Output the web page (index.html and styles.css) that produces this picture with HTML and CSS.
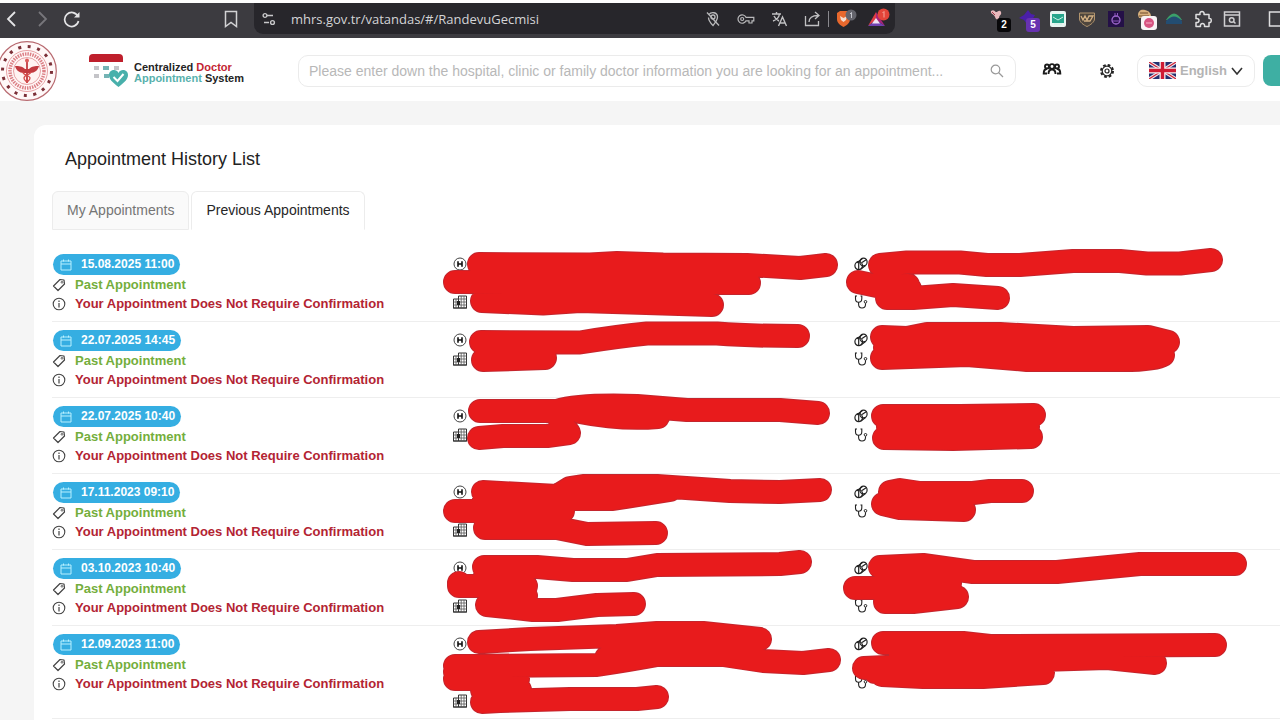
FILE: index.html
```html
<!DOCTYPE html>
<html lang="en">
<head>
<meta charset="utf-8">
<title>Appointment History List</title>
<link rel="stylesheet" href="styles.css">
</head>
<body>
<svg class="defs" aria-hidden="true">
  <symbol id="i-cal" viewBox="0 0 12 12"><path d="M1 2h10v9H1zM1 5h10M3.500 .5v2M8.500 .5v2" fill="none" stroke="currentColor"/></symbol>
  <symbol id="i-tag" viewBox="0 0 14 14"><path d="M8 1.500 12 2l.5 4-6.500 6.500L1.500 8z" fill="none" stroke="currentColor" stroke-width="1.200" stroke-linejoin="round"/><circle cx="10" cy="4.300" r=".9" fill="none" stroke="currentColor" stroke-width=".8"/></symbol>
  <symbol id="i-info" viewBox="0 0 14 14"><circle cx="7" cy="7" r="5.800" fill="none" stroke="currentColor" stroke-width="1.100"/><path d="M7 6v4.500M7 3.500v1.400" stroke="currentColor" stroke-width="1.200"/></symbol>
  <symbol id="i-hosp" viewBox="0 0 14 14"><circle cx="7" cy="7" r="6" fill="none" stroke="#444" stroke-width="1"/><path d="M5 4.300v5.400M9 4.300v5.400M5 7h4" stroke="#111" stroke-width="1.600"/></symbol>
  <symbol id="i-bld" viewBox="0 0 14 14"><path d="M5.500 13V1h8v12zM.5 13V4h5v9zM0 13h14" fill="none" stroke="#333" stroke-width="1"/><path d="M8.200 1v12M11 1v12M5.500 4h8M5.500 7h8M5.500 10h8M3 4v9M.5 7h5M.5 10h5" stroke="#555" stroke-width=".8"/><path d="M4 6h3v4H4z" fill="#222"/></symbol>
  <symbol id="i-clinic" viewBox="0 0 14 14"><g fill="none" stroke="#222" stroke-width="1.200"><ellipse cx="4.700" cy="8.700" rx="3.800" ry="4"/><path d="M4.700 4.700v8M2.500 6l6-4.500M7 12l4.500-3.500M8 5.500l4.500-3"/><ellipse cx="9.500" cy="5" rx="3.600" ry="3.900"/></g></symbol>
  <symbol id="i-steth" viewBox="0 0 14 14"><path d="M3 1H1.500v2.500C1.500 6 3 7.300 4.500 7.300S7.800 6 7.800 3.500V1H6.500M4.600 7.300v2c0 2.200 1.400 3.700 3.400 3.700s3.500-1.400 3.500-3.500V8.200" fill="none" stroke="#222" stroke-width="1.100"/><circle cx="11.500" cy="6.800" r="1.300" fill="none" stroke="#222"/></symbol>
</svg>

<nav class="toolbar" aria-label="Browser">
  <div class="nav">
    <button class="tb" aria-label="Back"><svg width="16" height="18" viewBox="0 0 16 18"><path d="M11 2 4 9l7 7" fill="none" stroke="#e4e4e6" stroke-width="1.800"/></svg></button>
    <button class="tb" aria-label="Forward"><svg width="16" height="18" viewBox="0 0 16 18"><path d="m5 2 7 7-7 7" fill="none" stroke="#77767b" stroke-width="1.800"/></svg></button>
    <button class="tb" aria-label="Reload"><svg width="18" height="18" viewBox="0 0 18 18"><path d="M15 6.500A7 7 0 1 0 15.500 11" fill="none" stroke="#e4e4e6" stroke-width="1.700"/><path d="M16.500 2v5.500H11z" fill="#e4e4e6"/></svg></button>
    <button class="tb bookmark" aria-label="Bookmark"><svg width="16" height="18" viewBox="0 0 16 18"><path d="M2.500 1.500h11v15L8 12.500l-5.500 4z" fill="none" stroke="#d2d2d4" stroke-width="1.500"/></svg></button>
  </div>
  <div class="address">
    <svg width="14" height="14" viewBox="0 0 14 14"><g fill="none" stroke="#c8c8ca" stroke-width="1.400"><circle cx="3" cy="3.500" r="1.900"/><path d="M5 3.500h6M2 10.500h5"/><circle cx="10.500" cy="10.500" r="1.900"/></g></svg>
    <input class="url" aria-label="Address" value="mhrs.gov.tr/vatandas/#/RandevuGecmisi">
    <div class="actions">
      <button class="tb" aria-label="Location blocked"><svg width="16" height="16" viewBox="0 0 16 16"><g fill="none" stroke="#b9b9bb" stroke-width="1.300"><path d="M4 3.500C6 .5 12.500 1 12.500 6c0 3-4.500 8.500-4.500 8.500S3.500 10 3.500 6.500"/><circle cx="8" cy="6" r="2"/><path d="m2 1.500 12 13"/></g></svg></button>
      <button class="tb" aria-label="Passwords"><svg width="18" height="12" viewBox="0 0 18 12"><g fill="none" stroke="#b9b9bb" stroke-width="1.200"><path d="M9 4.300A4.200 4.200 0 1 0 9 7.800h3V10h3V7.800h1.800V4.300z"/><circle cx="5.200" cy="6" r="1.500"/></g></svg></button>
      <button class="tb" aria-label="Translate"><svg width="17" height="16" viewBox="0 0 17 16"><path d="M1 3h9M5.500 1v2M8.500 3C8 6 5 9 2 10M3 5c1 2.500 3 4 5 5M7.500 15l4-9 4 9M9 12h5" fill="none" stroke="#c0c0c2" stroke-width="1.400"/></svg></button>
      <button class="tb" aria-label="Share"><svg width="17" height="16" viewBox="0 0 17 16"><path d="M1.500 5v9.500h13V10M5 11c0-4 3-6.500 9-6.500M11 1l4 3.500L11 8" fill="none" stroke="#c0c0c2" stroke-width="1.300"/></svg></button>
      <span class="sep"></span>
      <button class="tb" aria-label="Shields"><svg width="24" height="24" viewBox="0 0 24 24"><path d="M4 6l3-2h7l3 2v6c0 4-3 6-6.500 8C7 18 4 16 4 12z" fill="#e8682d"/><path d="m7 9 3.500 2L14 9l-1 4-2.500 2L8 13z" fill="#f4ddd0"/><circle cx="18" cy="8" r="5.500" fill="#64646c"/><path d="m17 7 1.500-1.500V11" stroke="#c5c5cc" fill="none"/></svg></button>
      <button class="tb" aria-label="Rewards"><svg width="24" height="24" viewBox="0 0 24 24"><path d="M10 5v8l-8 6z" fill="#df3d43"/><path d="m10 5 9 14-9-6z" fill="#a9237b"/><path d="m2 19 8-6 9 6z" fill="#7042b0"/><path d="m10 11 4 5.500H6z" fill="#f2e3f1"/><circle cx="17.500" cy="7.500" r="6" fill="#e24439"/><path d="m16.500 6 1.500-1.500V10.500" stroke="#f5a49a" fill="none"/></svg></button>
    </div>
  </div>
  <div class="exts">
    <button class="tb" aria-label="Extension, 2"><svg width="24" height="24" viewBox="0 0 24 24"><path d="M3 4c3-2 4 1 5 1s4-3 5 0-2 3-2 6-3 2-4-1-5-3-4-6z" fill="#e9b9bd"/><path d="m4 5 3 3" stroke="#a33949"/></svg><span class="badge b-black">2</span></button>
    <button class="tb" aria-label="Extension, 5"><svg width="24" height="24" viewBox="0 0 24 24"><path d="m11 3 3 4 4 1-3 5-5 4-3-4-5-2 5-3z" fill="#4a1fa8"/></svg><span class="badge b-violet">5</span></button>
    <button class="tb" aria-label="Mail extension"><svg width="16" height="16" viewBox="0 0 16 16"><rect width="16" height="16" rx="2" fill="#e9f5f2"/><path d="M2 3h12v9H2z" fill="#27a58c"/><path d="m3 6 5 3 5-3M4 13h8" stroke="#c9f0e5" fill="none"/></svg></button>
    <button class="tb" aria-label="Guard extension"><svg width="18" height="18" viewBox="0 0 18 18"><path d="M1.500 3h15v6c0 3-4 6-7.500 7.500C5.500 15 1.500 12 1.500 9z" fill="#4f463d" stroke="#b2946d"/><path d="m3 6 2 4 2-4 2 4 2-4h4l-3 5H6" fill="none" stroke="#d4b184" stroke-width="1.300"/></svg></button>
    <button class="tb" aria-label="Potion extension"><svg width="16" height="16" viewBox="0 0 16 16"><rect width="16" height="16" fill="#241047"/><circle cx="8" cy="9" r="4" fill="none" stroke="#a26bd1" stroke-width="1.300"/><path d="M7 2v4M9.500 2v4M5 10h6" stroke="#8c56c0"/></svg></button>
    <button class="tb" aria-label="Shop extension"><svg width="24" height="24" viewBox="0 0 24 24"><path d="M5 8c0-4 3-6 7-5s6 3 6 7l-12 1z" fill="#d7b07c"/><path d="M7 6h8M6 9h10" stroke="#6f4d2c"/><rect x="8" y="9" width="16" height="14" rx="3" fill="#f8f3f5"/><circle cx="16" cy="16" r="5" fill="#d75381"/><path d="M13 16h6" stroke="#f7b4ca"/></svg></button>
    <button class="tb" aria-label="Mountain extension"><svg width="18" height="18" viewBox="0 0 18 18"><path d="M1 10Q9-3 17 10z" fill="#3ba06a"/><path d="M1 11Q9 2 17 11v3H1z" fill="#234d72"/></svg></button>
    <button class="tb" aria-label="Extensions"><svg width="18" height="18" viewBox="0 0 18 18"><path d="M2 4.500h4c-1-4 5-4 4 0h5v4c3-1 3 5 0 4v4H10.500c1-4-5-4-4 0H2v-4c4 1 4-5 0-4z" fill="none" stroke="#dededf" stroke-width="1.500" stroke-linejoin="round"/></svg></button>
    <button class="tb" aria-label="Search tabs"><svg width="18" height="18" viewBox="0 0 18 18"><g fill="none" stroke="#cfcfd1" stroke-width="1.500"><path d="M1.500 2h15v14h-15zM1.500 5h15"/><circle cx="8.700" cy="10" r="2.300"/><path d="m10.500 11.500 2 2"/></g></svg></button>
    <span class="sep dark"></span>
    <button class="tb" aria-label="Sidebar"><svg width="18" height="18" viewBox="0 0 18 18"><path d="M1.500 2h15v14h-15zM14 2v14" fill="none" stroke="#dededf" stroke-width="1.500"/></svg></button>
  </div>
</nav>

<header class="header">
  <svg class="seal" width="57" height="62" viewBox="0 0 57 62" role="img" aria-label="Ministry seal">
    <circle cx="27" cy="31" r="29.300" fill="#fff8f8" stroke="#b86a70" stroke-width="1.200"/>
    <circle cx="27" cy="31" r="24.500" fill="none" stroke="#7c3038" stroke-width="3" stroke-dasharray="3 6.620"/>
    <circle cx="27" cy="31" r="20.500" fill="none" stroke="#e8a3a6" stroke-width="1"/>
    <circle cx="27" cy="31" r="17" fill="none" stroke="#dc8187" stroke-width="3.500" stroke-dasharray="1.500 1"/>
    <circle cx="27" cy="31" r="13.500" fill="#fff3f2" stroke="#e8a3a6"/>
    <path d="M15 26c4 0 7 0 10 3h4c3-3 6-3 10-3-1 4-4 7-9 7h-6c-5 0-8-3-9-7z" fill="#c23a40"/>
    <path d="M27 21v22" stroke="#c23a40" stroke-width="1.800"/>
    <path d="M23 32c0 4 7 3 7 6s-3 3-3 5c0-2-3-2-3-5s6-3 7-6" fill="none" stroke="#d34b4b" stroke-width="1.300"/>
    <circle cx="27" cy="20.500" r="2" fill="#dc5c5c"/>
  </svg>
  <a class="brand" href="#">
    <svg width="42" height="34" viewBox="0 0 42 34" aria-hidden="true">
      <path d="M1 8V4q0-4 4-4h26q4 0 4 4v4z" fill="#bf1f2c"/>
      <path d="M6 12h5v4H6zM26 12h5v4h-5zM6 20h5v4H6z" fill="#c4c4c8"/><path d="M15 12h6v4h-6zM16 20h5v4h-5z" fill="#74b3b4"/>
      <path d="M30.500 33C24 28 21 25 21 21c0-5 7-7 9.500-2 2.500-5 9.500-3 9.500 2 0 4-3 7-9.500 12z" fill="#48b0ab"/>
      <path d="m25.500 23 4 4 6-7" fill="none" stroke="#fff" stroke-width="2"/>
    </svg>
    <span class="brand-text"><span>Centralized <b>Doctor</b></span><span><i>Appointment</i> System</span></span>
  </a>
  <form class="search" role="search">
    <input type="text" aria-label="Search" placeholder="Please enter down the hospital, clinic or family doctor information you are looking for an appointment...">
    <button type="button" aria-label="Search"><svg width="14" height="14" viewBox="0 0 14 14"><circle cx="5.500" cy="5.500" r="4.300" fill="none" stroke="#999" stroke-width="1.200"/><path d="m8.500 8.500 4.500 4.500" stroke="#999" stroke-width="1.300"/></svg></button>
  </form>
  <button class="hicon" aria-label="Family"><svg width="20" height="18" viewBox="0 0 20 18"><g fill="none" stroke="#1b1b1b" stroke-width="1.900"><circle cx="5" cy="4.500" r="2"/><circle cx="15" cy="4.500" r="2"/><circle cx="10" cy="4.500" r="2.400"/><path d="M5 11.500H1.700C1.700 8.500 2.500 7 5 7M15 7c2.500 0 3.300 1.500 3.300 4.500H15M6.500 12c0-3.200 1-4.500 3.500-4.500s3.500 1.300 3.500 4.500"/></g></svg></button>
  <button class="hicon" aria-label="Settings"><svg width="16" height="16" viewBox="0 0 16 16"><circle cx="8" cy="8" r="6" fill="none" stroke="#222" stroke-width="2" stroke-dasharray="2.700 2.010"/><circle cx="8" cy="8" r="4.800" fill="none" stroke="#222" stroke-width="1.200"/><circle cx="8" cy="8" r="2" fill="none" stroke="#222" stroke-width="1.200"/></svg></button>
  <label class="lang">
    <svg width="27" height="17" viewBox="0 0 27 17" aria-hidden="true"><path fill="#24306f" d="M0 0h27v17H0z"/><path d="m0 0 27 17M27 0 0 17" stroke="#f1e9ee" stroke-width="3.500"/><path d="m0 0 27 17M27 0 0 17" stroke="#cf2539" stroke-width="1.200"/><path d="M13.500 0v17M0 8.500h27" stroke="#f5f0f2" stroke-width="6"/><path d="M13.500 0v17M0 8.500h27" stroke="#cf1c34" stroke-width="3.400"/></svg>
    <select aria-label="Language"><option>English</option></select>
    <svg class="chev" width="12" height="8" viewBox="0 0 12 8" aria-hidden="true"><path d="m1 1 5 6 5-6" fill="none" stroke="#333" stroke-width="1.600"/></svg>
  </label>
  <button class="login" aria-label="Account"></button>
</header>

<main class="card">
  <h1>Appointment History List</h1>
  <div class="tabs" role="tablist">
    <button class="tab" role="tab" aria-selected="false">My Appointments</button>
    <button class="tab active" role="tab" aria-selected="true">Previous Appointments</button>
  </div>
  <div class="list">
    <article class="row">
      <div class="state"><span class="date"><svg><use href="#i-cal"/></svg>15.08.2025 11:00</span><span class="past"><svg><use href="#i-tag"/></svg>Past Appointment</span><span class="confirm"><svg><use href="#i-info"/></svg>Your Appointment Does Not Require Confirmation</span></div>
      <div class="place"><svg><use href="#i-hosp"/></svg><span></span><svg><use href="#i-bld"/></svg></div>
      <div class="place"><svg><use href="#i-clinic"/></svg><span></span><svg><use href="#i-steth"/></svg></div>
    </article>
    <article class="row">
      <div class="state"><span class="date"><svg><use href="#i-cal"/></svg>22.07.2025 14:45</span><span class="past"><svg><use href="#i-tag"/></svg>Past Appointment</span><span class="confirm"><svg><use href="#i-info"/></svg>Your Appointment Does Not Require Confirmation</span></div>
      <div class="place"><svg><use href="#i-hosp"/></svg><svg><use href="#i-bld"/></svg></div>
      <div class="place"><svg><use href="#i-clinic"/></svg><svg><use href="#i-steth"/></svg></div>
    </article>
    <article class="row">
      <div class="state"><span class="date"><svg><use href="#i-cal"/></svg>22.07.2025 10:40</span><span class="past"><svg><use href="#i-tag"/></svg>Past Appointment</span><span class="confirm"><svg><use href="#i-info"/></svg>Your Appointment Does Not Require Confirmation</span></div>
      <div class="place"><svg><use href="#i-hosp"/></svg><svg><use href="#i-bld"/></svg></div>
      <div class="place"><svg><use href="#i-clinic"/></svg><svg><use href="#i-steth"/></svg></div>
    </article>
    <article class="row">
      <div class="state"><span class="date"><svg><use href="#i-cal"/></svg>17.11.2023 09:10</span><span class="past"><svg><use href="#i-tag"/></svg>Past Appointment</span><span class="confirm"><svg><use href="#i-info"/></svg>Your Appointment Does Not Require Confirmation</span></div>
      <div class="place"><svg><use href="#i-hosp"/></svg><span></span><svg><use href="#i-bld"/></svg></div>
      <div class="place"><svg><use href="#i-clinic"/></svg><svg><use href="#i-steth"/></svg></div>
    </article>
    <article class="row">
      <div class="state"><span class="date"><svg><use href="#i-cal"/></svg>03.10.2023 10:40</span><span class="past"><svg><use href="#i-tag"/></svg>Past Appointment</span><span class="confirm"><svg><use href="#i-info"/></svg>Your Appointment Does Not Require Confirmation</span></div>
      <div class="place"><svg><use href="#i-hosp"/></svg><span></span><svg><use href="#i-bld"/></svg></div>
      <div class="place"><svg><use href="#i-clinic"/></svg><span></span><svg><use href="#i-steth"/></svg></div>
    </article>
    <article class="row">
      <div class="state"><span class="date"><svg><use href="#i-cal"/></svg>12.09.2023 11:00</span><span class="past"><svg><use href="#i-tag"/></svg>Past Appointment</span><span class="confirm"><svg><use href="#i-info"/></svg>Your Appointment Does Not Require Confirmation</span></div>
      <div class="place"><svg><use href="#i-hosp"/></svg><span></span><span></span><svg><use href="#i-bld"/></svg></div>
      <div class="place"><svg><use href="#i-clinic"/></svg><span></span><svg><use href="#i-steth"/></svg></div>
    </article>
    <!-- marker strokes that hide the personal details -->
    <svg class="marker" width="1228" height="472" viewBox="52 246 1228 472" aria-hidden="true">
      <defs><g id="ink">
        <path d="M479 264L590 264.500 617 263 663 264.500 747 265 800 268 826 265M455 282L749 283M482 301L543 303.500 580 301 712 305"/>
        <path d="M481 342L580 342.500 Q620 336 647 333.500L717 333.500 Q750 336 798 336M483 360L545 358"/>
        <path d="M480 411L557 411 Q580 404 637 406L687 410 780 410 818 413M580 412Q620 420 658 417M479 438L503 436 547 436 569 433 560 421"/>
        <path d="M483 492L557 496 570 488 583 486 657 486 730 491 780 492 820 490M565 499L613 499 670 490M455 511L563 511M485 528L557 528 587 534 656 533M484 500h70M485 519h70"/>
        <path d="M484 567L537 567 573 570 627 570 657 565 780 564 800 562M459 583L459 586 526 586M485 576h36M487 605L533 610 557 610 597 605 634 604M490 596h36"/>
        <path d="M479 642L530 639 617 636 657 633 703 633 760 639M455 666L597 665 Q630 660 657 655L723 655 763 661 803 663 829 660M606 658L660 645 750 649M455 679L518 679M455 672h60M482 702L500 701 570 699 637 699 657 697M482 690h38"/>
        <path d="M880 265L907 262.500 960 262.500 987 265 1020 265 1073 261 1120 261 1147 263.500 1180 263.500 1211 260M858 282L877 286 908 285M887 298L913 298 953 295 998 298M890 289h20"/>
        <path d="M882 337L907 338 927 334 1000 334 1073 338 1148 337 1168 342M882 358L967 355 1027 360 1123 360Q1155 360 1163 355M885 348L1160 348"/>
        <path d="M883 416L960 416 1034 415M884 438L953 439 1031 437M888 427L1028 427"/>
        <path d="M890 492L900 490 920 493 973 493 990 491 1022 491M883 504L900 508 964 510M890 499h70"/>
        <path d="M880 567L923 565 973 572 1057 572 1140 564 1235 564M855 588L950 588M885 602L913 602 957 597M888 578L950 583"/>
        <path d="M883 643L963 643 990 646 1215 645M864 668L1040 660 1107 658 1155 663M882 675L923 677 983 677 1043 673M900 655L1090 655M875 672h165"/>
      </g></defs>
      <use href="#ink" class="ink-edge"/><use href="#ink" class="ink-fill"/>
    </svg>
  </div>
</main>
</body>
</html>
```

FILE: styles.css
```css
* { box-sizing: border-box; }
body { margin: 0; padding-top: 3px; background: #f5f5f5; font-family: "Liberation Sans", Arial, sans-serif; overflow: hidden; }
body::before { content: ""; position: absolute; top: 0; left: 0; right: 0; height: 3px; background: #fdfdfd; }
button { border: 0; background: none; padding: 0; font: inherit; }
svg { display: block; flex: none; }
.defs { position: absolute; width: 0; height: 0; }

.toolbar { display: flex; height: 35px; background: #3c3b40; overflow: hidden; }
.tb { position: relative; flex: none; width: 24px; height: 24px; display: grid; place-items: center; }
.nav { display: flex; align-items: center; gap: 6px; width: 254px; padding: 0 11px 3px 0; }
.bookmark { margin-left: auto; }
.address { flex: 1; display: flex; align-items: center; height: 31px; padding: 0 5px 0 8px; background: #27262b; border-radius: 0 0 9px 9px; }
.url { flex: 1; min-width: 0; margin-left: 15px; padding: 0; border: 0; background: none; color: #d4d4d6; font: 13px "Open Sans", "Noto Sans", sans-serif; outline: 0; }
.actions { display: flex; align-items: center; gap: 9px; }
.sep { width: 1px; height: 16px; background: #8a898e; }
.actions .sep { margin: 0 -5px; }
.sep.dark { margin: 0 4px 0 7px; background: #232227; }
.exts { display: flex; align-items: center; gap: 5px; width: 385px; padding: 0 0 3px 93px; }
.badge { position: absolute; left: 9px; top: 11px; width: 14px; height: 14px; border-radius: 3px; color: #fff; font: bold 10px/14px "Liberation Sans", sans-serif; text-align: center; }
.b-black { background: #08080a; }
.b-violet { background: #6732b0; }

.header { display: flex; align-items: center; height: 63px; padding-top: 2px; background: #fff; }
.header > * { flex: none; }
.brand { display: flex; align-items: center; gap: 4px; width: 210px; margin-left: 31px; color: #242424; text-decoration: none; }
.brand-text { display: grid; padding-top: 4px; font: bold 11px/11px "Liberation Sans", sans-serif; white-space: nowrap; }
.brand-text b { color: #c32431; }
.brand-text i { color: #58b1ad; font-style: normal; }
.header .search { flex: 1; display: flex; align-items: center; height: 32px; margin: 0 24px 0 0; padding: 0 11px 0 10px; border: 1px solid #ebebeb; border-radius: 10px; }
.search input { flex: 1; min-width: 0; padding: 0; border: 0; outline: 0; background: none; font: 14px "Liberation Sans", Arial, sans-serif; }
.search input::placeholder { color: #b8b8b8; opacity: 1; }
.hicon { width: 24px; height: 24px; display: grid; place-items: center; margin-right: 31px; }
.hicon + .lang { margin-left: -13px; }
.lang { display: flex; align-items: center; width: 118px; height: 32px; padding: 0 11px; border: 1px solid #ececec; border-radius: 10px; }
.lang select { flex: 1; min-width: 0; margin-left: 4px; padding: 0; border: 0; background: none; appearance: none; color: #b4b4b4; font: bold 13px "Liberation Sans", sans-serif; }
.login { width: 17px; height: 31px; margin-left: 8px; background: #3eafa3; border-radius: 8px 0 0 8px; }

.card { margin: 24px 0 0 34px; padding: 22px 0 20px 18px; background: #fff; border-radius: 12px 0 0 0; }
h1 { margin: 0 0 20px 13px; color: #222; font-size: 18px; font-weight: 400; line-height: 24px; }
.tabs { display: flex; gap: 2px; }
.tab { height: 39px; padding: 0 14px 2px; border: 1px solid #ececec; border-radius: 6px 6px 0 0; background: #fafafa; color: #757575; font-size: 14px; }
.tab.active { border-bottom-color: #fff; background: #fff; color: #262626; }

.list { position: relative; margin-top: 16px; }
.row { display: grid; grid-template-columns: 401px 401px 1fr; min-height: 76px; padding: 8px 0; border-bottom: 1px solid #eee; }
.state { display: flex; flex-direction: column; align-items: flex-start; font-size: 13px; font-weight: 700; line-height: 19px; white-space: nowrap; }
.state span { display: flex; align-items: center; }
.state svg { width: 14px; height: 14px; margin-right: 9px; color: #444; }
.state .date { height: 21px; margin-left: 1px; padding: 0 6px 0 7px; border-radius: 11px; background: #35aee2; color: #fff; font-size: 12px; }
.state .date svg { width: 12px; height: 12px; margin-right: 9px; color: #b8f0ff; }
.past { color: #74ae3c; }
.confirm { color: #b32433; }
.place { display: grid; grid-auto-rows: 19px; align-items: center; align-content: start; }
.place svg { width: 14px; height: 14px; }
.marker { position: absolute; top: 0; left: 0; overflow: visible; pointer-events: none; }
.marker use { fill: none; stroke-linecap: round; stroke-linejoin: round; }
.ink-edge { stroke: #c4252d; stroke-width: 24px; }
.ink-fill { stroke: #e81b1c; stroke-width: 22px; }
```
